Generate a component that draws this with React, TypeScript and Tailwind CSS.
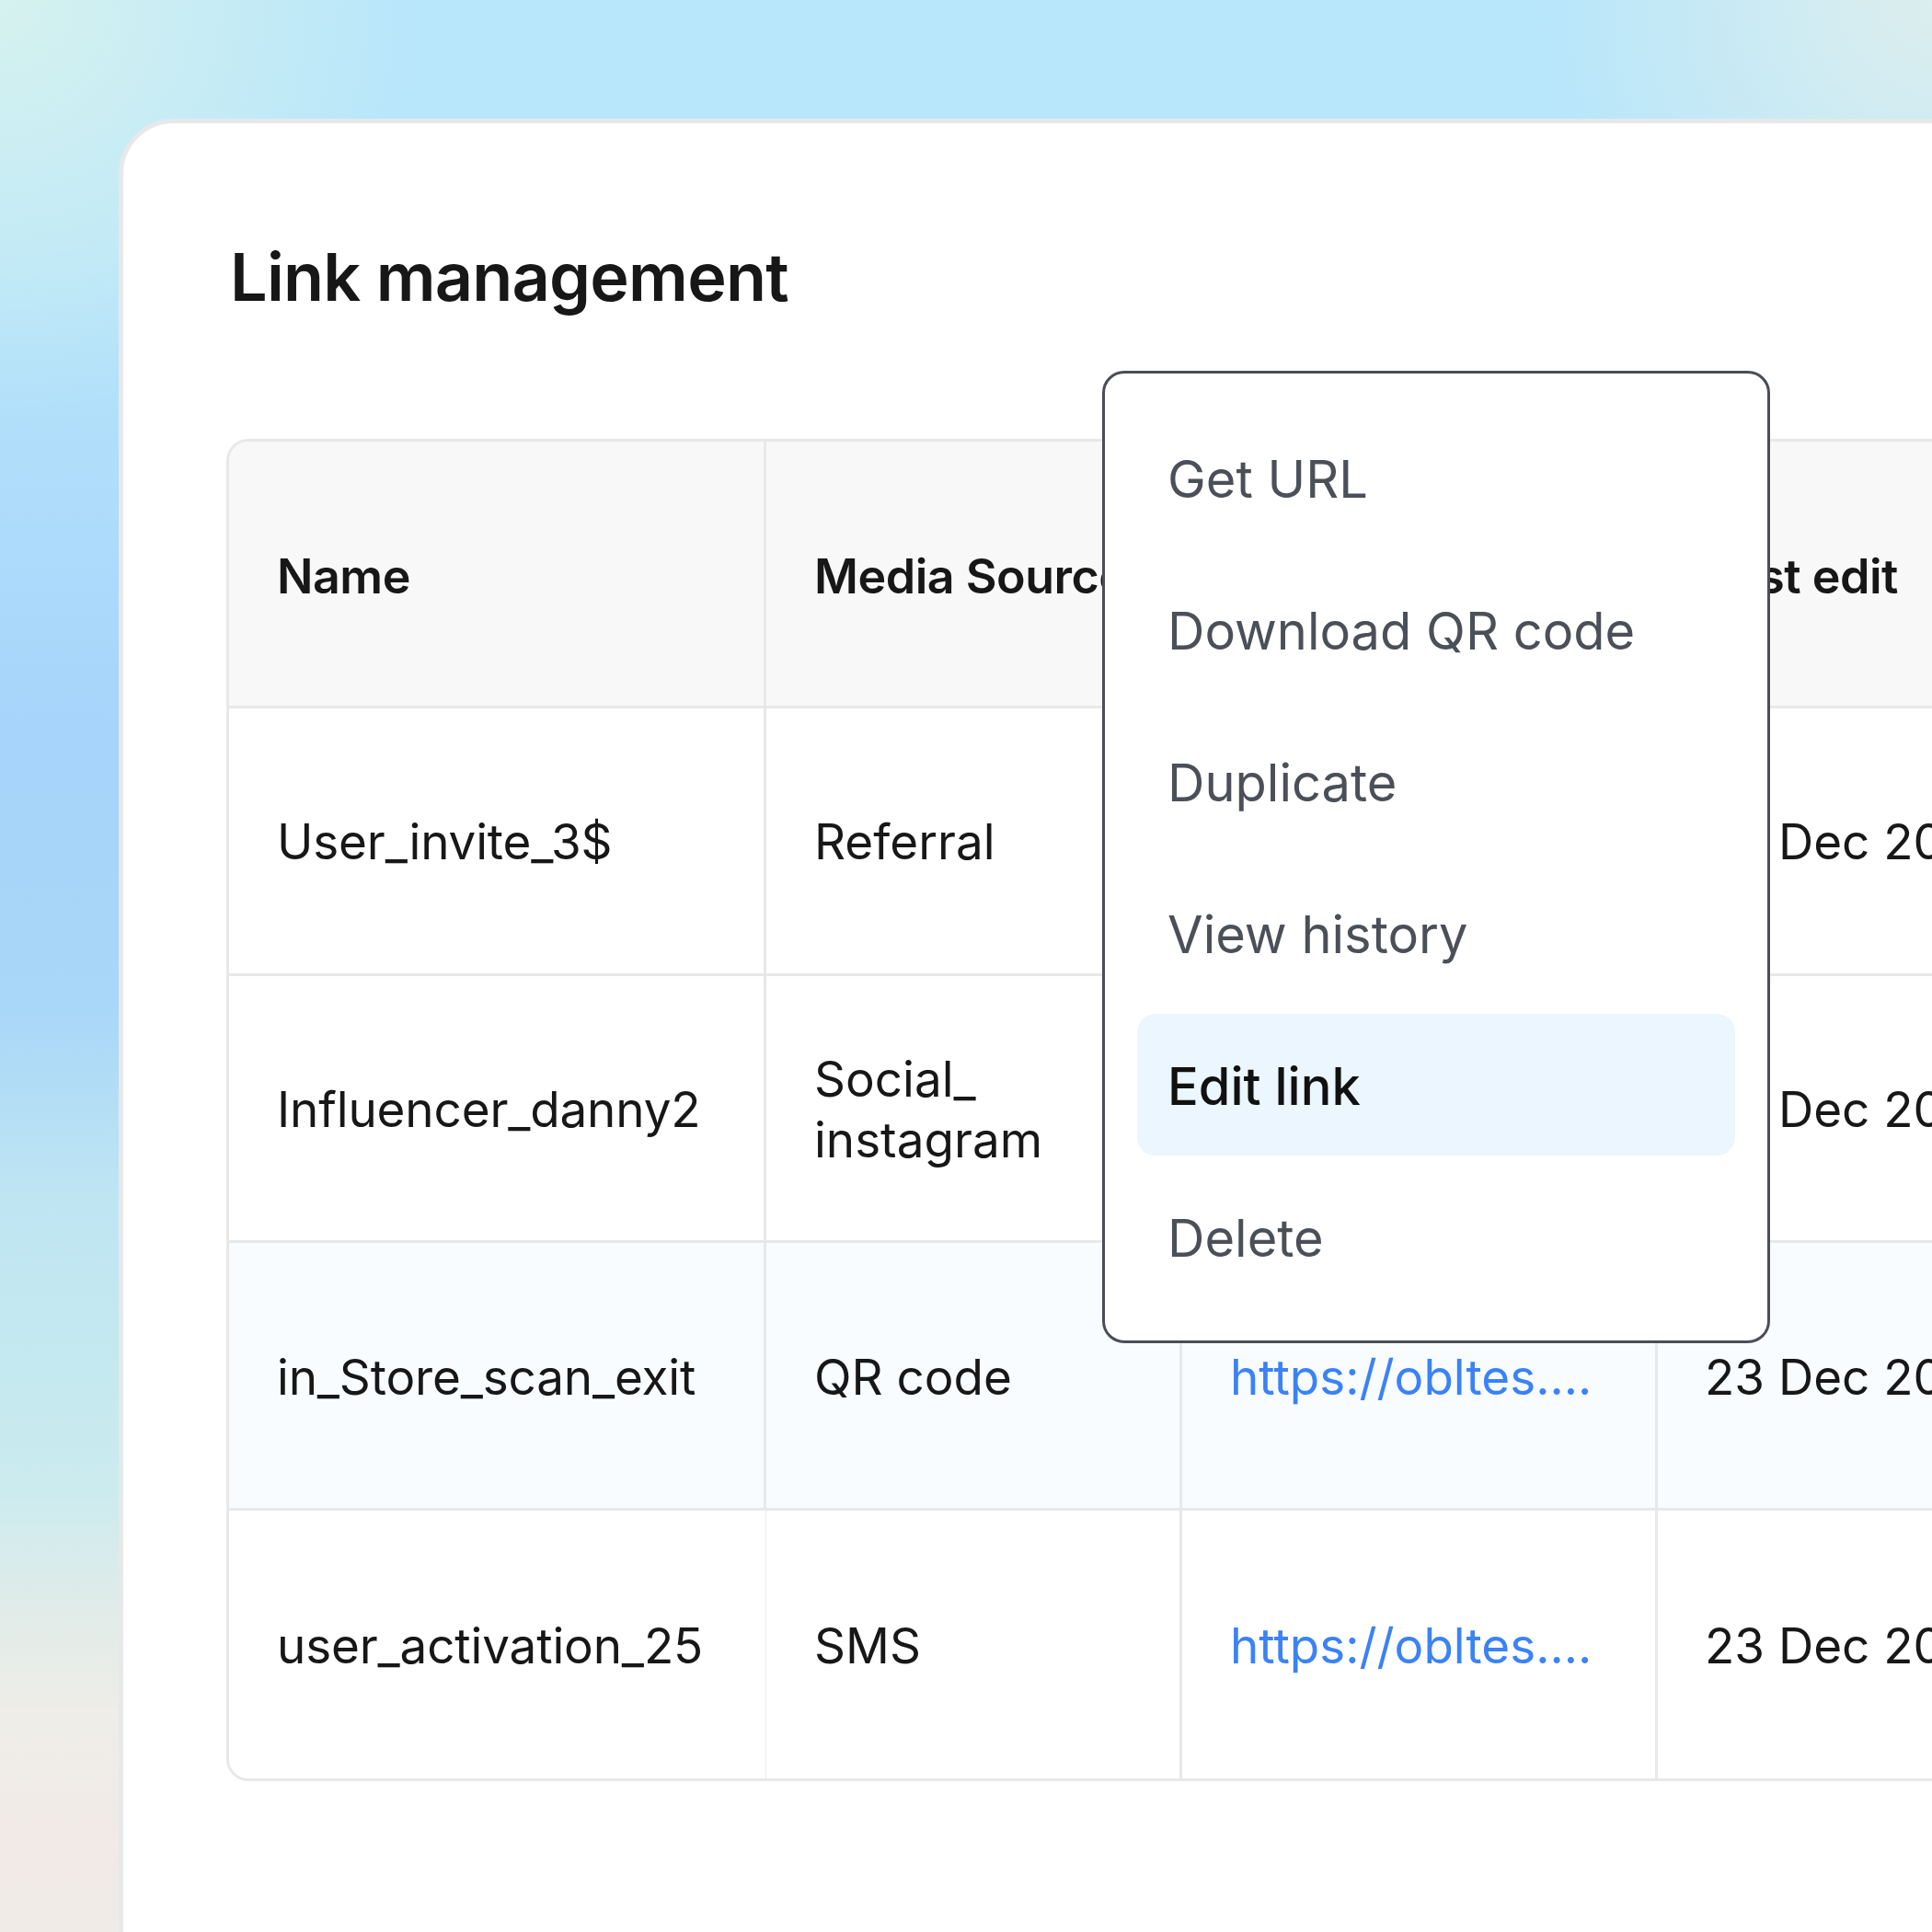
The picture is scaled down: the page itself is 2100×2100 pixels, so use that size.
const rows = [
  { name: 'User_invite_3$', source: ['Referral'], bg: 'bg-white' },
  { name: 'Influencer_danny2', source: ['Social_', 'instagram'], bg: 'bg-white' },
  { name: 'in_Store_scan_exit', source: ['QR code'], bg: 'bg-[#f8fcff]' },
  { name: 'user_activation_25', source: ['SMS'], bg: 'bg-white' },
]

const menuItems = ['Get URL', 'Download QR code', 'Duplicate', 'View history', 'Edit link', 'Delete']

const gridCols = 'grid grid-cols-[584px_452px_517px_600px]'
const cell = 'flex items-center pl-[52px] border-[#e8e8e9]'

export default function App() {
  return (
    <div
      className="w-[2100px] h-[2100px] overflow-hidden pl-[129px] pt-[129px] text-[#171717] bg-[radial-gradient(circle_at_100%_0,#dceeee_0,transparent_420px),radial-gradient(circle_at_0_0,#d6f2ef_0,transparent_450px),linear-gradient(180deg,#b8e6fa_0,#b8e6fa_250px,#a6d4fb_800px,#a9d7f8_1100px,#bfe5f3_1300px,#c4e9ef_1500px,#ccebef_1620px,#e2ece8_1760px,#eeede8_1860px,#f1eae6_2000px,#f0ebe7_2100px)]"
      style={{ fontFamily: 'Inter, "Liberation Sans", sans-serif' }}
    >
      <div className="w-[2300px] h-[2300px] bg-white rounded-tl-[60px] border-[5px] border-[#e7e8e9] pl-[112px] pt-[125px]">
        <h1 className="ml-[4px] text-[72px] leading-[84px] font-semibold tracking-[-0.8px]">Link management</h1>

        <div className="relative mt-[134px] w-[2100px]">
          <div className="rounded-[24px] border-[3px] border-[#e8e8e9] overflow-hidden">
            <div className={`${gridCols} h-[290px] bg-[#f8f8f8] border-b-[3px] border-[#e8e8e9] text-[52px] leading-[66px] font-semibold tracking-[-0.5px]`}>
              <div className={`${cell} border-r-[3px] pt-[7px]`}>Name</div>
              <div className={`${cell} border-r-[3px] pt-[7px]`}>Media Source</div>
              <div className={`${cell} border-r-[3px] pt-[7px]`}>Link</div>
              <div className={`${cell} border-r-[3px] pt-[7px] !pl-[51px]`}>Last edit</div>
            </div>
            {rows.map((row, i) => (
              <div
                key={row.name}
                className={`${gridCols} ${row.bg} ${i < 3 ? 'h-[290.67px] border-b-[3px]' : 'h-[291px]'} border-[#e8e8e9] text-[53px] leading-[66px]`}
              >
                <div className={`${cell} pt-[3px] tracking-[-0.15px] ${i < 3 ? 'border-r-[3px]' : 'border-r'}`}>{row.name}</div>
                <div className={`${cell} border-r-[3px] pt-[3px]`}>
                  <div>
                    {row.source.map((s) => (
                      <div key={s}>{s}</div>
                    ))}
                  </div>
                </div>
                <div className={`${cell} border-r-[3px] pt-[3px] text-[#3b82f6]`}>https://obltes....</div>
                <div className={`${cell} border-r-[3px] pt-[3px] !pl-[51px] whitespace-nowrap`}>23 Dec 2024</div>
              </div>
            ))}
          </div>

          <div className="absolute left-[952px] top-[-74px] w-[726px] h-[1057px] bg-white rounded-[24px] border-[3px] border-[#4b4e57] px-[35px] pt-[36px] flex flex-col gap-[11px] text-[56px] leading-[70px] text-[#4b5058]">
            {menuItems.map((item) => (
              <div
                key={item}
                className={`h-[154px] shrink-0 flex items-center px-[33px] pt-[4px] rounded-[20px] ${item === 'Edit link' ? 'bg-[#ebf6fe] text-[#111111] font-medium' : ''}`}
              >
                {item}
              </div>
            ))}
          </div>
        </div>
      </div>
    </div>
  )
}
